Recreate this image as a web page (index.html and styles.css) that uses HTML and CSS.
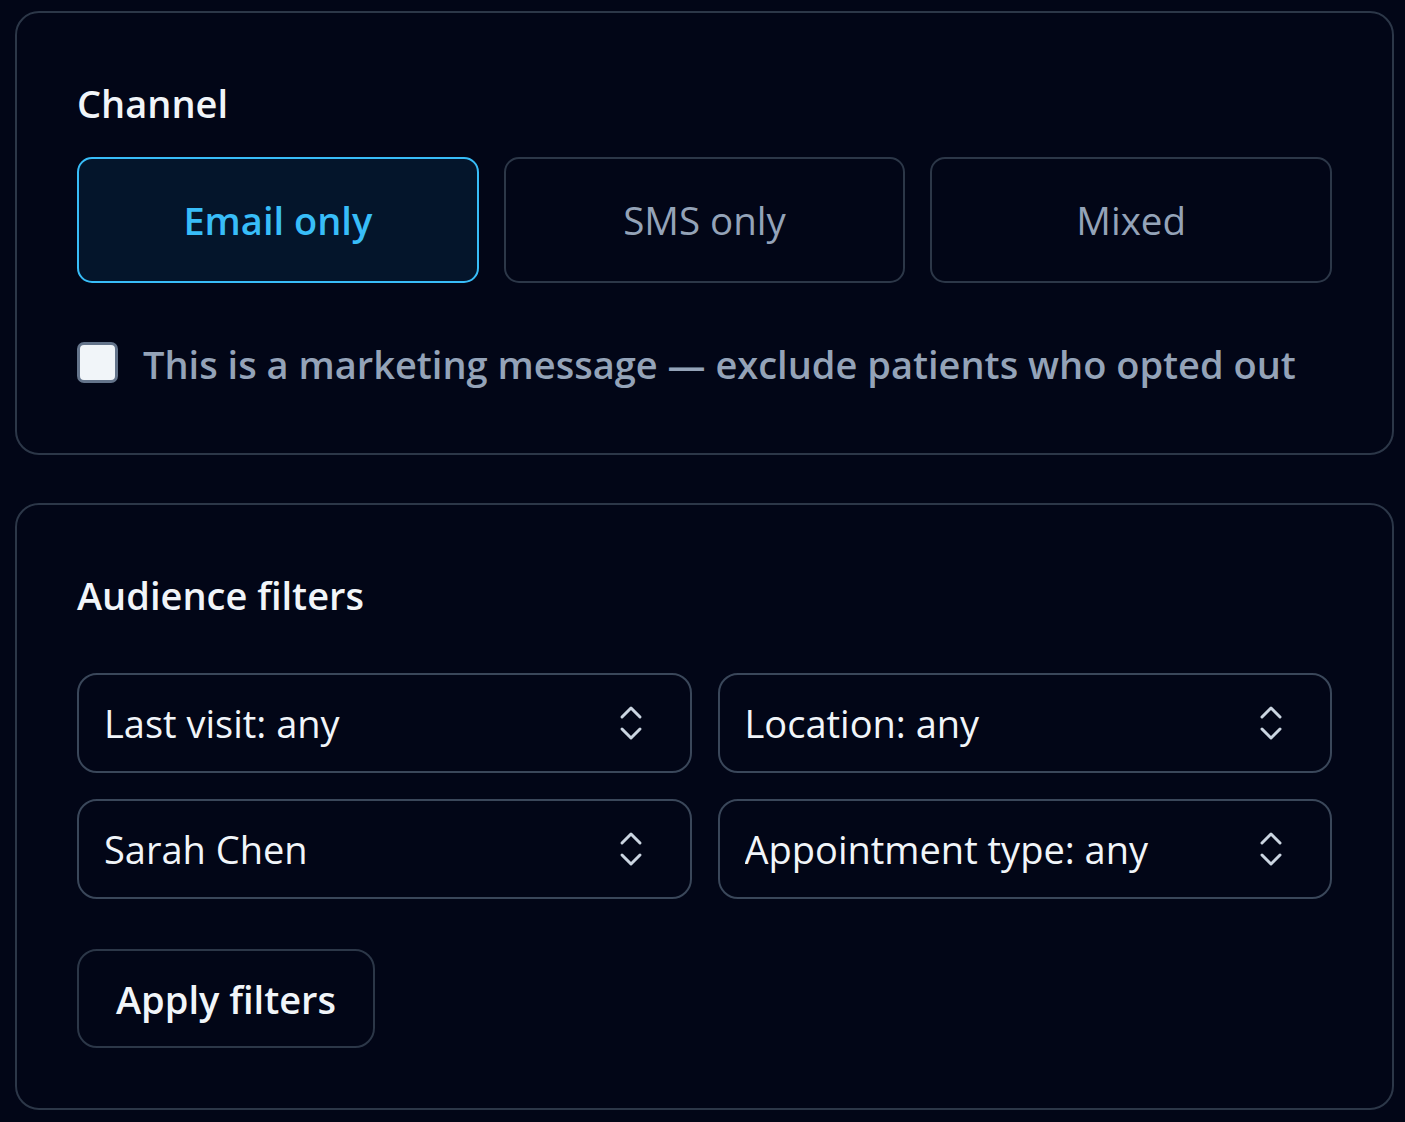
FILE: index.html
```html
<!DOCTYPE html>
<html lang="en">
<head>
<meta charset="utf-8">
<title>Campaign audience</title>
<link rel="stylesheet" href="styles.css">
</head>
<body>
<main class="page">
  <section class="card">
    <h2 class="card-title">Channel</h2>
    <div class="channel-options">
      <button class="channel-btn is-active" type="button">Email only</button>
      <button class="channel-btn" type="button">SMS only</button>
      <button class="channel-btn" type="button">Mixed</button>
    </div>
    <label class="check-row">
      <input class="check-box" type="checkbox">
      <span class="check-label">This is a marketing message — exclude patients who opted out</span>
    </label>
  </section>

  <section class="card card-filters">
    <h2 class="card-title">Audience filters</h2>
    <div class="filter-grid">
      <div class="select-wrap">
        <select class="select"><option>Last visit: any</option></select>
        <svg class="select-icon" viewBox="0 0 24 36" aria-hidden="true"><path d="M3 12 L12 3 L21 12 M3 24 L12 33 L21 24"/></svg>
      </div>
      <div class="select-wrap">
        <select class="select"><option>Location: any</option></select>
        <svg class="select-icon" viewBox="0 0 24 36" aria-hidden="true"><path d="M3 12 L12 3 L21 12 M3 24 L12 33 L21 24"/></svg>
      </div>
      <div class="select-wrap">
        <select class="select"><option>Sarah Chen</option></select>
        <svg class="select-icon" viewBox="0 0 24 36" aria-hidden="true"><path d="M3 12 L12 3 L21 12 M3 24 L12 33 L21 24"/></svg>
      </div>
      <div class="select-wrap">
        <select class="select"><option>Appointment type: any</option></select>
        <svg class="select-icon" viewBox="0 0 24 36" aria-hidden="true"><path d="M3 12 L12 3 L21 12 M3 24 L12 33 L21 24"/></svg>
      </div>
    </div>
    <button class="apply-btn" type="button">Apply filters</button>
  </section>
</main>
</body>
</html>
```
FILE: styles.css
```css
* { box-sizing: border-box; }

html, body {
  margin: 0;
  background: #020617;
}

body {
  font-family: "Open Sans", "Noto Sans", sans-serif;
  color: #f1f5f9;
}

.page {
  padding: 11px 11px 0 15px;
}

.card {
  border: 2px solid #2c3748;
  border-radius: 24px;
  padding: 62px 60px 61px 60px;
  margin-bottom: 48px;
  background: #020617;
}

.card-filters {
  padding-bottom: 60px;
}

.card-title {
  margin: 0;
  font-size: 38px;
  line-height: 56px;
  font-weight: 600;
  color: #f1f5f9;
}

.channel-options {
  display: grid;
  grid-template-columns: repeat(3, 1fr);
  gap: 25px;
  margin-top: 26px;
}

.channel-btn {
  height: 126px;
  border: 2px solid #2c3748;
  border-radius: 15px;
  background: transparent;
  color: #94a3b8;
  font-family: inherit;
  font-size: 38.5px;
  font-weight: 400;
  padding: 0;
}

.channel-btn.is-active {
  border-color: #38bdf8;
  background: #04152b;
  color: #38bdf8;
  font-weight: 600;
  font-size: 38px;
}

.check-row {
  display: flex;
  align-items: center;
  gap: 25px;
  height: 60px;
  margin-top: 49px;
}

.check-box {
  appearance: none;
  margin: 0;
  width: 41px;
  height: 41px;
  border: 3px solid #64748b;
  border-radius: 7px;
  background: #f1f5f9;
  flex: none;
}

.check-label {
  font-size: 38px;
  font-weight: 600;
  color: #94a3b8;
  white-space: nowrap;
  position: relative;
  top: 2px;
}

.filter-grid {
  display: grid;
  grid-template-columns: 1fr 1fr;
  gap: 26px 26px;
  margin-top: 50px;
}

.select-wrap {
  position: relative;
}

.select {
  appearance: none;
  width: 100%;
  height: 100px;
  border: 2px solid #3a475a;
  border-radius: 20px;
  background: transparent;
  color: #f1f5f9;
  font-family: inherit;
  font-size: 38px;
  padding: 0 80px 0 25px;
}

.select option {
  background: #020617;
}

.select-icon {
  position: absolute;
  right: 49px;
  top: 50%;
  width: 24px;
  height: 36px;
  transform: translateY(-50%);
  fill: none;
  stroke: #cbd5e1;
  stroke-width: 3;
  stroke-linecap: round;
  stroke-linejoin: round;
  pointer-events: none;
}

.apply-btn {
  margin-top: 50px;
  height: 99px;
  padding: 0 37px;
  border: 2px solid #2c3748;
  border-radius: 20px;
  background: transparent;
  color: #f1f5f9;
  font-family: inherit;
  font-size: 38px;
  font-weight: 600;
}
```
